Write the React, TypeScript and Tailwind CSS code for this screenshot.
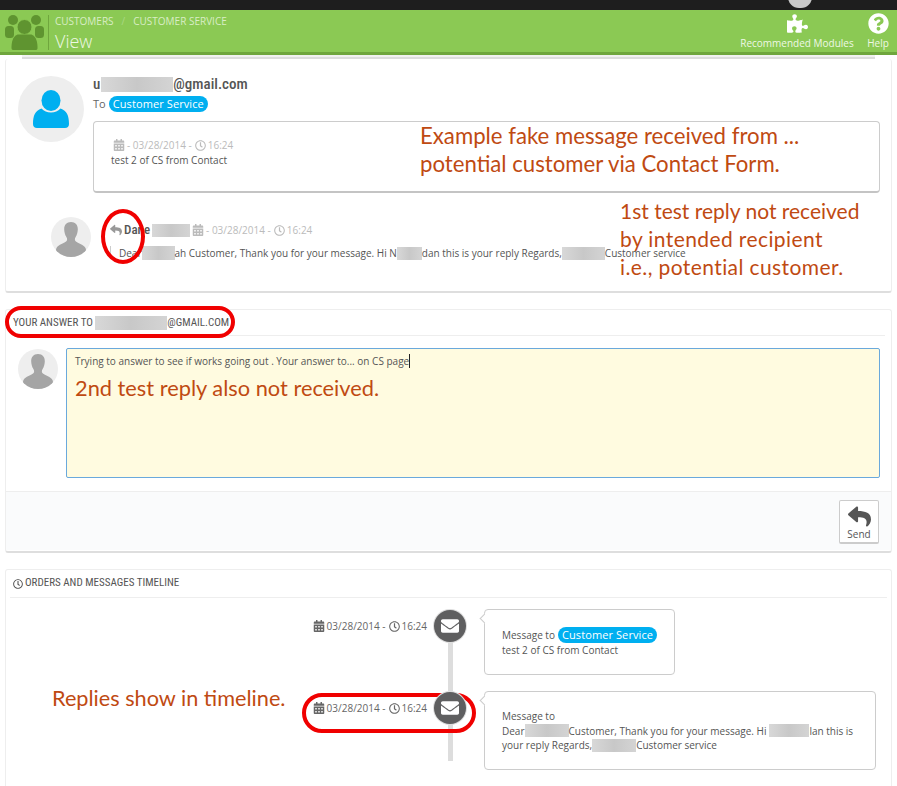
import { FaCalendarAlt, FaEnvelope, FaPuzzlePiece, FaQuestionCircle, FaRegClock, FaReply } from 'react-icons/fa';

const body = "font-['Open_Sans',sans-serif]";
const condensed = "font-['Roboto',sans-serif] [font-stretch:75%]";
const annotation = "font-['Lato',sans-serif] text-[#bf4a12]";

function Blur({ w, h = 'h-[13px]' }: { w: string; h?: string }) {
  return <span className={`inline-block align-middle bg-gradient-to-r from-[#d8d8d8] via-[#c8c8c8] to-[#d4d4d4] ${w} ${h}`} />;
}

function Badge() {
  return (
    <span className="inline-block rounded-full bg-[#00aff0] px-1 text-[11px] leading-[16px] tracking-[0.1px] text-white">
      Customer Service
    </span>
  );
}

function Stamp({ muted }: { muted?: boolean }) {
  return (
    <span className={`inline-flex items-center gap-[2px] text-[10px] ${muted ? 'text-[#bbbbbb]' : 'text-[#666666]'}`}>
      <FaCalendarAlt className="text-[12px]" />
      <span>{muted ? ' - ' : ''}03/28/2014 -</span>
      <FaRegClock className="ml-[1px] text-[11px]" />
      <span>16:24</span>
    </span>
  );
}

function GrayAvatar({ className }: { className: string }) {
  return (
    <div className={`shrink-0 overflow-hidden rounded-full bg-[#eeeeee] ${className}`}>
      <svg viewBox="0 0 40 40" className="h-full w-full" fill="#a5a5a5">
        <path d="M20 5c-4.600 0-7 3.200-6.800 7.600.1 2.500.8 5.500 2.300 7.600.8 1.100.8 2.800.1 3.700-1.800 2.200-8.300 3.100-10.100 7.200-.7 1.700-.8 3.900-.8 8.900h30.600c0-5-.1-7.200-.8-8.900-1.800-4.100-8.300-5-10.100-7.200-.7-.9-.7-2.600.1-3.700 1.500-2.100 2.200-5.100 2.300-7.600C27 8.200 24.600 5 20 5z" />
      </svg>
    </div>
  );
}

function Panel({ className = '', children }: { className?: string; children: React.ReactNode }) {
  return (
    <section className={`mx-[5px] rounded-[3px] border border-[#eeeeee] border-b-2 border-b-[#dedede] bg-white ${className}`}>
      {children}
    </section>
  );
}

function HeaderLogo() {
  return (
    <svg viewBox="0 0 40 36" className="h-[36px] w-[40px]" fill="#5f9430">
      <circle cx="8" cy="6" r="5" />
      <circle cx="31" cy="6" r="5" />
      <rect x="0" y="12" width="9" height="12" rx="3.500" />
      <rect x="30" y="12" width="9" height="12" rx="3.500" />
      <circle cx="19.500" cy="13" r="7.500" stroke="#8bc954" strokeWidth="1" />
      <path d="M8 36c-1 0-1.500-.8-1.500-2 0-6 1-11 6-13.500h14c5 2.500 6 7.500 6 13.500 0 1.200-.5 2-1.500 2z" />
    </svg>
  );
}

function TimelineNode({ tail }: { tail: string }) {
  return (
    <div className="ml-[6px] flex w-[34px] shrink-0 flex-col items-center">
      <span className="z-10 mt-[1px] flex h-[32px] w-[32px] items-center justify-center rounded-full bg-[#5f5f60] text-[18px] text-white ring-1 ring-[#dddddd]">
        <FaEnvelope />
      </span>
      <span className={`w-[5px] flex-1 bg-[#dddddd] ${tail}`} />
    </div>
  );
}

function Bubble({ className, children }: { className: string; children: React.ReactNode }) {
  return (
    <div className={`relative ml-[17px] rounded-[4px] border border-[#cccccc] pl-[17px] pt-[17px] text-[10px] text-[#555555] ${className}`}>
      <span className="absolute left-[-4px] top-[5px] h-[7px] w-[7px] rotate-45 border-b border-l border-[#cccccc] bg-white" />
      {children}
    </div>
  );
}

export default function App() {
  return (
    <div className={`relative h-[786px] w-[897px] overflow-hidden bg-white text-[#666666] ${body}`}>
      {/* top bar */}
      <div className="relative h-[10px] bg-[#1e1e1e]">
        <div className="absolute left-[788px] top-[-14px] h-[22px] w-[24px] rounded-full bg-[#c8c8c8]" />
      </div>

      {/* page header */}
      <header className="flex h-[45px] items-stretch border-b-[3px] border-[#6fa63d] bg-[#8bc954] text-white">
        <div className="ml-[5px] mt-[4px]">
          <HeaderLogo />
        </div>
        <div className="ml-[3px] mt-[5px] h-[35px] border-l border-[#6fa63d] pl-[6px]">
          <div className="flex gap-[8px] text-[10px] leading-[13px] text-[#d9edc5]">
            <span>CUSTOMERS</span>
            <span className="text-[#a9d884]">/</span>
            <span>CUSTOMER SERVICE</span>
          </div>
          <div className="mt-[3px] text-[18px] font-light leading-[20px] text-[#eef8e4]">View</div>
        </div>
        <div className="ml-auto mr-[5px] flex">
          <div className="flex w-[114px] flex-col items-center pt-[3px]">
            <FaPuzzlePiece className="text-[21px]" />
            <span className="mt-[3px] text-[10px] leading-[13px] text-[#eef8e4]">Recommended Modules</span>
          </div>
        </div>
        <div className="flex w-[38px] flex-col items-center pt-[3px]">
          <FaQuestionCircle className="text-[21px]" />
          <span className="mt-[3px] text-[10px] leading-[13px] text-[#eef8e4]">Help</span>
        </div>
      </header>

      {/* strip of the panel scrolled under the header */}
      <div className="mx-[22px] h-[4px] border-b-2 border-[#dddddd] bg-[#f1f1f1]" />

      {/* message panel */}
      <Panel className="h-[234px] border-t-0 pl-[12px] pr-[11px] pt-[17px]">
        <div className="flex gap-[9px]">
          <div className="flex h-[66px] w-[66px] shrink-0 items-center justify-center rounded-full bg-[#eeeeee]">
            <svg viewBox="0 0 36 38" className="h-[38px] w-[36px]" fill="#00aff0">
              <ellipse cx="18" cy="10.500" rx="9.500" ry="10.500" />
              <path d="M4 38c-2.500 0-4-1.500-4-4 0-8 2-13.500 8.500-15.500 2.500 2.700 5.600 4 9.500 4s7-1.300 9.500-4C34 20.500 36 26 36 34c0 2.500-1.500 4-4 4z" />
            </svg>
          </div>
          <div className="min-w-0 flex-1">
            <div className={`mt-[1px] flex h-[15px] items-center text-[15px] font-medium text-[#555555] ${condensed}`}>
              u<Blur w="ml-[1px] w-[72px]" h="h-[15px]" />@gmail.com
            </div>
            <div className="mt-[4px] flex items-center gap-[3px] text-[11px] leading-[16px]">
              To <Badge />
            </div>
            <div className="mt-[9px] h-[72px] rounded-[4px] border border-[#cccccc] border-b-2 border-b-[#c4c4c4] pl-[17px] pt-[16px]">
              <div className="pl-[2px] leading-[14px]">
                <Stamp muted />
              </div>
              <div className="text-[10px] leading-[16px] text-[#555555]">test 2 of CS from Contact</div>
            </div>
          </div>
        </div>
        <div className="ml-[33px] mt-[24px] flex gap-[19px]">
          <GrayAvatar className="h-[40px] w-[40px]" />
          <div className="mt-[6px]">
            <div className="flex h-[14px] items-center gap-[2px]">
              <FaReply className="text-[12px] text-[#999999]" />
              <span className={`text-[13px] font-medium text-[#555555] ${condensed}`}>Dane</span>
              <Blur w="w-[38px]" />
              <Stamp muted />
            </div>
            <div className="mt-[8px] flex">
              <div className="mt-[1px] h-[13px] border-l border-[#cccccc]" />
              <div className="ml-[8px] flex items-center whitespace-nowrap text-[10px] leading-[16px] text-[#555555]">
                Dear<Blur w="w-[33px]" h="h-[14px]" />ah Customer, Thank you for your message. Hi N<Blur w="w-[25px]" />dan this is your reply Regards,
                <Blur w="w-[43px]" />Customer service
              </div>
            </div>
          </div>
        </div>
      </Panel>

      {/* answer panel */}
      <Panel className="mt-[16px] h-[244px]">
        <div className={`mx-[6px] flex h-[26px] items-center border-b border-[#eeeeee] pl-[1px] pt-[1px] text-[11px] uppercase text-[#555555] ${condensed}`}>
          Your answer to&nbsp;<Blur w="w-[72px]" h="h-[14px]" />@gmail.com
        </div>
        <div className="flex gap-[8px] pl-[12px] pr-[11px] pt-[12px]">
          <GrayAvatar className="mt-[1px] h-[40px] w-[40px]" />
          <div className="h-[130px] flex-1 rounded-[2px] border border-[#6aa9dc] bg-[#fffbe0] pl-[8px] pt-[4px] text-[10px] leading-[16px] text-[#555555]">
            Trying to answer to see if works going out . Your answer to... on CS page
            <span className="border-l border-[#222222]" />
          </div>
        </div>
        <div className="mt-[13px] flex h-[59px] justify-end border-t border-[#eeeeee] bg-[#fafbfc] pr-[12px] pt-[8px]">
          <button className="flex h-[44px] w-[40px] flex-col items-center rounded-[2px] border border-[#cccccc] border-b-2 bg-white pt-[4px] text-[10px] leading-[13px] text-[#555555]">
            <FaReply className="text-[23px] text-[#555555]" />
            <span>Send</span>
          </button>
        </div>
      </Panel>

      {/* timeline panel */}
      <Panel className="mt-[16px] h-[240px]">
        <div className={`mx-[4px] flex h-[28px] items-center gap-[2px] border-b border-[#eeeeee] pl-[3px] text-[11px] uppercase text-[#555555] ${condensed}`}>
          <FaRegClock className="text-[10px]" />
          Orders and messages timeline
        </div>
        <div className="mt-[11px] flex flex-col gap-[16px]">
          <div className="flex h-[66px]">
            <div className="flex w-[421px] shrink-0 justify-end pt-[10px]">
              <div className="h-[14px] leading-[14px]">
                <Stamp />
              </div>
            </div>
            <TimelineNode tail="-mb-[16px]" />
            <Bubble className="w-[191px] leading-[15px]">
              <div className="flex items-center gap-[3px]">
                Message to <Badge />
              </div>
              <div>test 2 of CS from Contact</div>
            </Bubble>
          </div>
          <div className="flex h-[79px]">
            <div className="flex w-[421px] shrink-0 justify-end pt-[10px]">
              <div className="h-[14px] leading-[14px]">
                <Stamp />
              </div>
            </div>
            <TimelineNode tail="mb-[9px]" />
            <Bubble className="w-[392px] leading-[14.500px]">
              <div>Message to</div>
              <div className="flex items-center whitespace-nowrap">
                Dear<Blur w="w-[44px]" />Customer, Thank you for your message. Hi<Blur w="ml-[3px] w-[40px]" />lan this is
              </div>
              <div className="flex items-center whitespace-nowrap">
                your reply Regards,<Blur w="w-[44px]" />Customer service
              </div>
            </Bubble>
          </div>
        </div>
      </Panel>

      {/* hand-written notes laid over the screenshot */}
      <div className={`absolute left-[420px] top-[122px] w-[420px] text-[22.200px] leading-[28px] ${annotation}`}>
        Example fake message received from ...
        <br />
        potential customer via Contact Form.
      </div>
      <div className={`absolute left-[620px] top-[197px] w-[270px] text-[21px] leading-[28px] ${annotation}`}>
        1st test reply not received
        <br />
        <span className="tracking-[0.4px]">by intended recipient</span>
        <br />
        <span className="tracking-[0.4px]">i.e., potential customer.</span>
      </div>
      <div className={`absolute left-[75px] top-[375px] text-[21.800px] leading-[26px] ${annotation}`}>2nd test reply also not received.</div>
      <div className={`absolute left-[52px] top-[684px] text-[21.700px] leading-[28px] ${annotation}`}>Replies show in timeline.</div>

      {/* red markers */}
      <div className="absolute left-[101px] top-[209px] h-[55px] w-[44px] rounded-[50%] border-4 border-[#f00000]" />
      <div className="absolute left-[5px] top-[306px] h-[32px] w-[230px] rounded-[16px] border-4 border-[#f00000]" />
      <div className="absolute left-[302px] top-[693px] h-[40px] w-[174px] rounded-[20px] border-4 border-[#f00000]" />
    </div>
  );
}
